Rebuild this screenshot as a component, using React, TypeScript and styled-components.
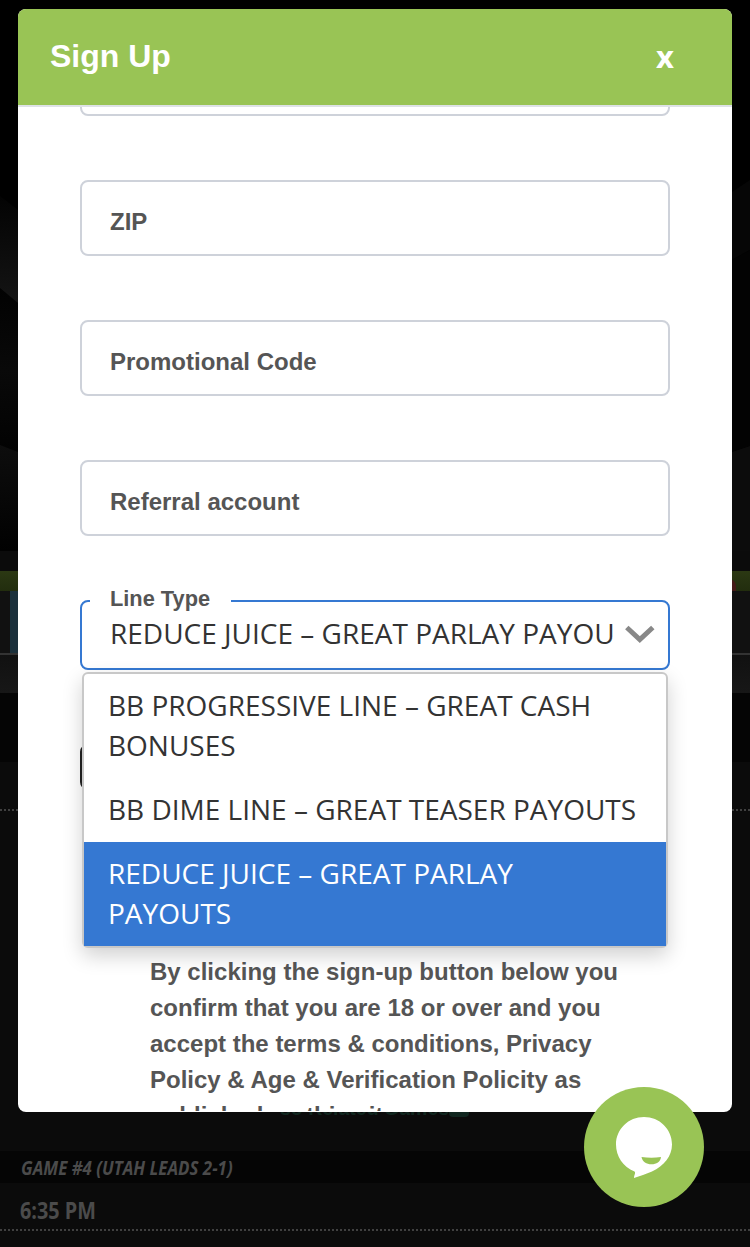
import React from "react";
import styled, { createGlobalStyle } from "styled-components";

const Global = createGlobalStyle`
  * { box-sizing: border-box; }
  body { margin: 0; background: #000; overflow: hidden; }
`;

const Page = styled.div`
  position: relative;
  width: 750px;
  height: 1247px;
  overflow: hidden;
  background: #000;
  font-family: "Liberation Sans", Arial, sans-serif;
`;

const Backdrop = styled.div`
  display: flex;
  flex-direction: column;
`;

const HeroArt = styled.svg`
  flex: none;
  display: block;
  width: 750px;
  height: 551px;
`;

const Band = styled.div<{ $h: number; $bg: string; $top?: boolean }>`
  flex: none;
  display: flex;
  align-items: ${(p) => (p.$top ? "flex-start" : "center")};
  height: ${(p) => p.$h}px;
  background: ${(p) => p.$bg};
`;

const Dots = styled.div`
  flex: none;
  height: 2px;
  background: repeating-linear-gradient(90deg, #404040 0 2px, #0b0b0b 2px 4px);
`;

const BlueTab = styled.div`
  width: 8px;
  height: 62px;
  margin-left: 10px;
  background: #1b303b;
`;

const RedTip = styled.div`
  width: 7px;
  height: 12px;
  margin: 8px 0 0 729px;
  border-radius: 0 7px 0 0;
  background: #451a18;
`;

const Related = styled.div`
  display: flex;
  align-items: center;
  padding-left: 280px;
  margin-top: -1px;
  color: #10261f;
  font-size: 19.5px;
  font-weight: 700;
  line-height: 24px;
  white-space: nowrap;
`;

const Badge = styled.span`
  width: 20px;
  height: 18px;
  border-radius: 4px;
  background: #10261f;
`;

const Condensed = styled.div<{ $size: number; $left: number; $drop: number; $italic?: boolean; $scale: number }>`
  margin-left: ${(p) => p.$left}px;
  padding-top: ${(p) => p.$drop}px;
  font-family: "Open Sans", sans-serif;
  font-size: ${(p) => p.$size}px;
  font-weight: 700;
  font-style: ${(p) => (p.$italic ? "italic" : "normal")};
  line-height: 32px;
  white-space: nowrap;
  color: #4b4b4b;
  transform: scaleX(${(p) => p.$scale});
  transform-origin: 0 50%;
`;

const Modal = styled.section`
  position: absolute;
  left: 18px;
  top: 9px;
  width: 714px;
  height: 1103px;
  display: flex;
  flex-direction: column;
  overflow: hidden;
  padding-bottom: 1px;
  border-radius: 8px;
  background: #fff;
`;

const Header = styled.header`
  flex: none;
  display: flex;
  align-items: center;
  justify-content: space-between;
  height: 98px;
  padding: 0 58px 2px 32px;
  border-bottom: 2px solid #dee2e6;
  background: #99c455;
  color: #fff;
`;

const Title = styled.h1`
  margin: 0;
  font-size: 32px;
  line-height: 36px;
`;

const Close = styled.button`
  padding: 0;
  border: 0;
  background: none;
  color: #fff;
  font: 700 31px/40px "Open Sans", sans-serif;
`;

const Body = styled.div`
  flex: 1;
  min-height: 0;
  overflow: hidden;
  padding: 0 62px;
`;

const Form = styled.form`
  display: flex;
  flex-direction: column;
  gap: 64px;
  margin-top: -67px;
`;

const Field = styled.label`
  flex: none;
  display: flex;
  align-items: center;
  height: 76px;
  padding: 8px 28px 0;
  border: 2px solid #ced2da;
  border-radius: 8px;
  color: #555;
  font-size: 24px;
  font-weight: 700;
`;

const Select = styled.div`
  position: relative;
  flex: none;
  display: flex;
  align-items: center;
  gap: 11px;
  height: 70px;
  padding: 0 12px 4px 28px;
  border: 2px solid #3578d2;
  border-radius: 8px;
  color: #333;
  font: 28px/40px "Open Sans", sans-serif;
`;

const SelectValue = styled.span`
  width: 504px;
  overflow: hidden;
  white-space: nowrap;
`;

const FloatingLabel = styled.span`
  position: absolute;
  left: 8px;
  top: -16px;
  width: 141px;
  padding-left: 20px;
  background: #fff;
  color: #555;
  font: 700 21.8px/26px "Liberation Sans", Arial, sans-serif;
`;

const Menu = styled.ul`
  position: absolute;
  left: 0;
  top: 70px;
  width: 586px;
  margin: 0;
  padding: 0;
  list-style: none;
  border: 2px solid #c8c8c8;
  border-radius: 6px;
  background: #fff;
  box-shadow: 0 8px 20px rgba(0, 0, 0, 0.18);
`;

const Option = styled.li<{ $active?: boolean }>`
  padding: 11px 24px 13px;
  background: ${(p) => (p.$active ? "#3578d2" : "transparent")};
  color: ${(p) => (p.$active ? "#fff" : "#333")};
`;

const Captcha = styled.div`
  width: 46px;
  height: 46px;
  margin-top: 74px;
  border: 2px solid #222;
  border-radius: 8px;
`;

const Terms = styled.p`
  margin: 164px 0 0 70px;
  color: #555;
  font-size: 24px;
  font-weight: 700;
  line-height: 36px;
  white-space: nowrap;
`;

const ChatButton = styled.button`
  position: absolute;
  left: 584px;
  top: 1087px;
  width: 120px;
  height: 120px;
  padding: 0;
  border: 0;
  border-radius: 50%;
  background: #99c455;
`;

export default function App() {
  return (
    <Page>
      <Global />
      <Backdrop>
        <HeroArt viewBox="0 0 750 551">
          <defs>
            <linearGradient id="rise" x1="0" y1="0" x2="0" y2="1">
              <stop offset="0" stopColor="#030303" />
              <stop offset="1" stopColor="#141414" />
            </linearGradient>
            <linearGradient id="fall" x1="0" y1="0" x2="0" y2="1">
              <stop offset="0" stopColor="#0d0d0d" />
              <stop offset="1" stopColor="#010101" />
            </linearGradient>
            <linearGradient id="mid" x1="0" y1="0" x2="0" y2="1">
              <stop offset="0" stopColor="#020202" />
              <stop offset="0.5" stopColor="#090909" />
              <stop offset="1" stopColor="#020202" />
            </linearGradient>
          </defs>
          <rect width="750" height="551" fill="#000" />
          <path fill="url(#mid)" d="M0 288L18 303V452L0 445Z" />
          <path fill="url(#rise)" d="M0 196L18 210V303L0 288Z" />
          <path fill="url(#fall)" d="M0 445L18 452V551H0Z" />
          <path fill="#060606" d="M732 192L750 180V250L732 260Z" />
          <path fill="#030303" d="M732 260L750 250V446L732 452Z" />
          <path fill="#0c0c0c" d="M732 452L750 446V551H732Z" />
        </HeroArt>
        <Band $h={20} $bg="#0b0b0b" />
        <Band $h={20} $bg="linear-gradient(#2b3813, #222d0e)"><RedTip /></Band>
        <Band $h={62} $bg="#111"><BlueTab /></Band>
        <Band $h={2} $bg="#333" />
        <Band $h={38} $bg="linear-gradient(#111, #171717)" />
        <Band $h={69} $bg="#050505" />
        <Band $h={47} $bg="#0b0b0b" />
        <Dots />
        <Band $h={286} $bg="#0b0b0b" />
        <Band $h={54} $bg="#0b0b0b" $top>
          <Related>so Related Games<Badge /></Related>
        </Band>
        <Band $h={32} $bg="#050505">
          <Condensed $size={20} $left={21} $drop={2} $italic $scale={0.845}>GAME #4 (UTAH LEADS 2-1)</Condensed>
        </Band>
        <Band $h={46} $bg="#0b0b0b">
          <Condensed $size={24} $left={20} $drop={8} $scale={0.825}>6:35 PM</Condensed>
        </Band>
        <Dots />
        <Band $h={16} $bg="#0b0b0b" />
      </Backdrop>
      <Modal>
        <Header>
          <Title>Sign Up</Title>
          <Close>x</Close>
        </Header>
        <Body>
          <Form>
            <Field />
            <Field>ZIP</Field>
            <Field>Promotional Code</Field>
            <Field>Referral account</Field>
            <Select>
              <FloatingLabel>Line Type</FloatingLabel>
              <SelectValue>REDUCE JUICE – GREAT PARLAY PAYOU</SelectValue>
              <svg width="30" height="20" viewBox="0 0 30 20" fill="none" stroke="#888" strokeWidth="5">
                <path d="M1.800 4.500L14.800 16.500L27.800 4.500" />
              </svg>
              <Menu>
                <Option>BB PROGRESSIVE LINE – GREAT CASH<br />BONUSES</Option>
                <Option>BB DIME LINE – GREAT TEASER PAYOUTS</Option>
                <Option $active>REDUCE JUICE – GREAT PARLAY<br />PAYOUTS</Option>
              </Menu>
            </Select>
          </Form>
          <Captcha />
          <Terms>
            By clicking the sign-up button below you<br />
            confirm that you are 18 or over and you<br />
            accept the terms &amp; conditions, Privacy<br />
            Policy &amp; Age &amp; Verification Policity as<br />
            published on this site
          </Terms>
        </Body>
      </Modal>
      <ChatButton aria-label="Chat">
        <svg width="120" height="120" viewBox="0 0 120 120">
          <path fill="#fff" d="M60 30C75.500 30 88 42 88 57.500C88 69 80 79 68 84.500C62 87 56 89 50 91C50 88 52 86 50.500 84.500C39 80 32 69 32 57.500C32 42 44.500 30 60 30Z" />
          <path fill="#99c455" d="M57.500 70Q67.500 71.500 77 70C76.500 75 72.500 77.300 67.500 77.300C62.500 77.300 58.500 75 57.500 70Z" />
        </svg>
      </ChatButton>
    </Page>
  );
}
